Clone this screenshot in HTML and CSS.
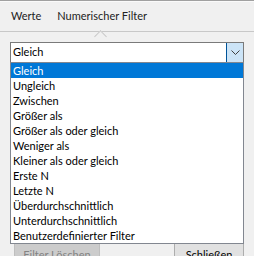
FILE: index.html
```html
<!DOCTYPE html>
<html>
<head>
<meta charset="utf-8">
<link rel="stylesheet" href="styles.css">
</head>
<body>
<div class="panel">
  <div class="tabs">
    <div class="tab">Werte</div>
    <div class="tab active">Numerischer Filter</div>
  </div>
  <div class="content">
    <div class="combo">
      <span class="combo-text">Gleich</span>
      <span class="combo-btn">
        <svg width="9" height="5" viewBox="0 0 9 5"><path d="M0.5 0.5 L4.5 4.5 L8.5 0.5" fill="none" stroke="#404040" stroke-width="1"/></svg>
      </span>
    </div>
    <ul class="list">
      <li class="item selected">Gleich</li>
      <li class="item">Ungleich</li>
      <li class="item">Zwischen</li>
      <li class="item">Größer als</li>
      <li class="item">Größer als oder gleich</li>
      <li class="item">Weniger als</li>
      <li class="item">Kleiner als oder gleich</li>
      <li class="item">Erste N</li>
      <li class="item">Letzte N</li>
      <li class="item">Überdurchschnittlich</li>
      <li class="item">Unterdurchschnittlich</li>
      <li class="item">Benutzerdefinierter Filter</li>
    </ul>
    <div class="buttons">
      <button class="btn btn-clear" disabled>Filter Löschen</button>
      <button class="btn btn-close">Schließen</button>
    </div>
  </div>
</div>
</body>
</html>
```

FILE: styles.css
```css
* { box-sizing: border-box; }
html, body {
  margin: 0;
  padding: 0;
  background: #f0f0f0;
  font-family: "Lato", "Liberation Sans", sans-serif;
  font-size: 11px;
  color: #000;
  overflow: hidden;
}
.panel {
  width: 254px;
  height: 256px;
  border-top: 1px solid #a0a0a0;
  position: relative;
}
.tabs {
  display: flex;
  height: 31px;
  border-top: 1px solid #fafafa;
  border-bottom: 1px solid #c8c8c8;
  padding-left: 11px;
  gap: 16px;
  align-items: center;
}
.tab {
  color: #222;
  position: relative;
  line-height: 16px;
  padding-bottom: 1px;
}
.tab.active::after {
  content: "";
  position: absolute;
  left: 39px;
  bottom: -16px;
  width: 8px;
  height: 8px;
  background: #f0f0f0;
  border-left: 1px solid #c8c8c8;
  border-top: 1px solid #c8c8c8;
  transform: rotate(45deg);
}
.content {
  padding: 10px 10px 0 10px;
  position: relative;
}
.combo {
  display: flex;
  height: 21px;
  width: 234px;
  border: 1px solid #7a7a7a;
  background: #fff;
  align-items: stretch;
}
.combo-text {
  flex: 1;
  padding-left: 2px;
  line-height: 18px;
}
.combo-btn {
  width: 17px;
  background: #cce4f7;
  border-left: 1px solid #005499;
  display: flex;
  align-items: center;
  justify-content: center;
}
.list {
  position: absolute;
  left: 10px;
  top: 30px;
  width: 234px;
  margin: 0;
  padding: 0;
  list-style: none;
  background: #fff;
  border: 1px solid #828790;
  z-index: 2;
}
.item {
  height: 15px;
  line-height: 15px;
  padding-left: 2px;
  white-space: nowrap;
}
.item.selected {
  background: #0078d7;
  color: #fff;
}
.buttons {
  display: flex;
  justify-content: space-between;
  padding: 180px 0 0 4px;
}
.btn {
  font-family: inherit;
  font-size: 11px;
  height: 23px;
  background: #e1e1e1;
  border: 1px solid #adadad;
  padding: 0;
  line-height: 19px;
}
.btn-clear {
  width: 86px;
  color: #838383;
  border-color: #bfbfbf;
  background: #cccccc;
}
.btn-close {
  width: 70px;
  color: #000;
}
```
